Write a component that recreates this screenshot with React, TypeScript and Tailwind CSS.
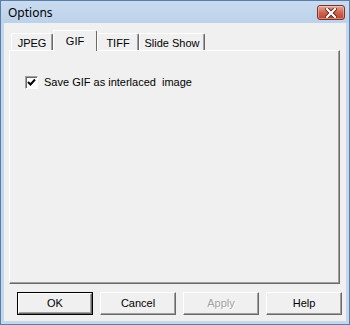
const sans = { fontFamily: '"Liberation Sans", Arial, sans-serif' };

function Tab({ label, width, active }: { label: string; width: string; active?: boolean }) {
  if (active) {
    return (
      <div
        className={`relative z-10 -mb-px flex h-[21px] ${width} items-start justify-center rounded-t-[2px] border-t border-l border-r border-t-white border-l-white border-r-[#696969] bg-[#f0f0f0] pt-[2px] text-[11px] text-black`}
      >
        {label}
      </div>
    );
  }
  return (
    <div
      className={`flex h-[17px] ${width} items-start justify-center rounded-t-[2px] border-t border-l border-r border-t-white border-l-white border-r-[#696969] pt-[1px] text-[11px] text-black shadow-[inset_-1px_0_0_#a0a0a0]`}
    >
      {label}
    </div>
  );
}

function Button({ label, isDefault, disabled }: { label: string; isDefault?: boolean; disabled?: boolean }) {
  return (
    <button
      className={`flex h-[23px] w-[76px] items-center justify-center border text-[11px] ${
        isDefault ? 'border-black' : 'border-t-white border-l-white border-r-[#696969] border-b-[#696969]'
      } bg-[#f0f0f0]`}
    >
      <span
        className={`flex h-full w-full items-center justify-center ${
          isDefault
            ? 'border border-t-white border-l-white border-r-[#696969] border-b-[#696969] shadow-[inset_-1px_-1px_0_#a0a0a0]'
            : 'shadow-[inset_-1px_-1px_0_#a0a0a0]'
        } ${disabled ? 'text-[#a0a0a0] [text-shadow:1px_1px_0_#ffffff]' : 'text-black'}`}
      >
        {label}
      </span>
    </button>
  );
}

export default function App() {
  return (
    <div className="flex h-[325px] w-[350px] flex-col border border-[#5c7ea6] bg-[#c3d7ed]" style={sans}>
      <div className="flex h-[22px] items-start justify-between bg-gradient-to-b from-[#c8dbf0] to-[#bcd2ea]">
        <span
          className="pl-[7px] pt-[4px] text-[12px] leading-[15px] text-black"
          style={{ fontFamily: '"Noto Sans", "Open Sans", sans-serif' }}
        >
          Options
        </span>
        <div className="mr-[4px] mt-[4px] flex h-[15px] w-[28px] items-center justify-center rounded-[3px] border border-[#7a3329] bg-gradient-to-b from-[#e6a897] via-[#cf6450] to-[#c3432e] shadow-[inset_0_0_0_1px_rgba(255,255,255,0.35)]">
          <svg width="12" height="10" viewBox="0 0 12 10">
            <path d="M2 1 L10 9 M10 1 L2 9" stroke="#5a2018" strokeWidth="4" strokeLinecap="square" />
            <path d="M2 1 L10 9 M10 1 L2 9" stroke="#ffffff" strokeWidth="2.2" strokeLinecap="square" />
          </svg>
        </div>
      </div>

      <div className="mx-[3px] mb-[3px] flex flex-1 flex-col bg-[#f0f0f0] pl-[5px] pt-[7px]">
        <div className="ml-[2px] flex items-end">
          <Tab label="JPEG" width="w-[42px]" />
          <Tab label="GIF" width="w-[44px]" active />
          <Tab label="TIFF" width="w-[42px]" />
          <Tab label="Slide Show" width="w-[66px]" />
        </div>
        <div className="h-[234px] w-[331px] border border-t-white border-l-white border-r-[#696969] border-b-[#696969] shadow-[inset_-1px_-1px_0_#a0a0a0] pl-[15px] pt-[23px]">
          <div className="flex items-center gap-[6px]">
            <span className="flex h-[13px] w-[13px] items-center justify-center border border-t-[#a0a0a0] border-l-[#a0a0a0] border-r-white border-b-white bg-white shadow-[inset_1px_1px_0_#696969]">
              <svg width="9" height="9" viewBox="0 0 9 9">
                <path d="M1 4 L3.5 6.5 L8 1.5" fill="none" stroke="#000000" strokeWidth="2" />
              </svg>
            </span>
            <span className="whitespace-pre text-[11px] text-black">Save GIF as interlaced  image</span>
          </div>
        </div>
        <div className="ml-[8px] mt-[8px] flex gap-[7px]">
          <Button label="OK" isDefault />
          <Button label="Cancel" />
          <Button label="Apply" disabled />
          <Button label="Help" />
        </div>
      </div>
    </div>
  );
}
